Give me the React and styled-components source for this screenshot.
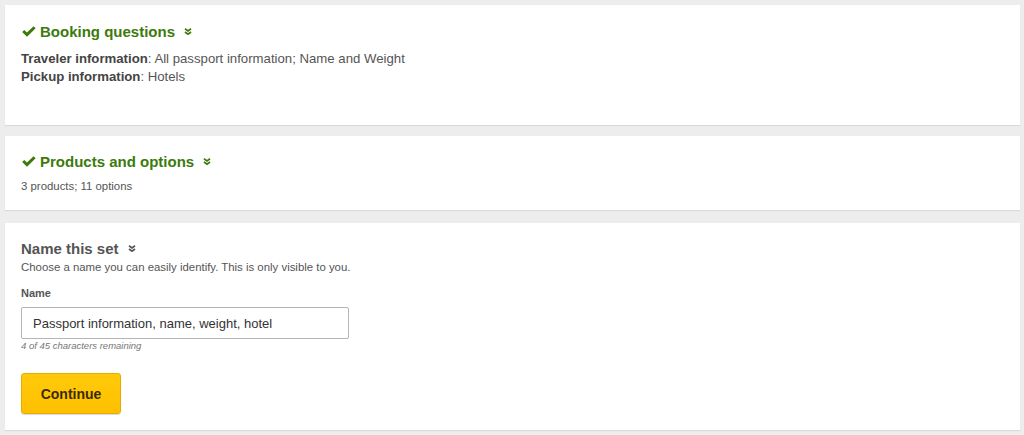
import React from 'react';
import styled, { createGlobalStyle } from 'styled-components';

const GlobalStyle = createGlobalStyle`
    body {
        margin: 0;
        background-color: #ededed;
        font-family: "Liberation Sans", Arial, sans-serif;
        color: #444;
    }
`;

const Page = styled.div`
    display: flex;
    flex-direction: column;
    padding: 5px 4px 5px 5px;
`;

const Card = styled.section`
    margin-top: ${(props) => props.$space || '0'};
    background-color: #fff;
    box-shadow: 0 1px 1px rgba(0, 0, 0, 0.08);
    padding: ${(props) => props.$pad || '16px'};
    display: flex;
    flex-direction: column;
    align-items: flex-start;
`;

const Title = styled.h2`
    display: flex;
    align-items: center;
    margin: 0;
    height: 20px;
    font-size: 15px;
    font-weight: bold;
    color: ${(props) => (props.$done ? '#3c7a0c' : '#555')};

    .check {
        width: 14px;
        height: 11px;
        margin: 0 4px 0 1px;
    }

    .toggle {
        width: 8px;
        height: 7px;
        margin-left: 9px;
        margin-top: 1px;
    }
`;

const Lines = styled.div`
    margin-top: ${(props) => props.$gap || '9px'};
    font-size: ${(props) => props.$size || '13px'};
    line-height: ${(props) => props.$line || '18px'};
    color: #555;

    b {
        color: #444;
    }
`;

const Label = styled.label`
    margin-top: 12px;
    font-size: 11px;
    line-height: 14px;
    font-weight: bold;
    color: #555;
`;

const Input = styled.input`
    box-sizing: border-box;
    margin-top: 7px;
    width: 328px;
    height: 32px;
    padding: 0 11px;
    border: 1px solid #b5b5b5;
    border-radius: 2px;
    font-family: "Liberation Sans", Arial, sans-serif;
    font-size: 13px;
    color: #333;
    outline: none;
`;

const Hint = styled.div`
    font-size: 9.5px;
    line-height: 12px;
    font-style: italic;
    color: #777;
    margin-top: 1px;
`;

const Button = styled.button`
    margin-top: 21px;
    width: 100px;
    height: 41px;
    border: 1px solid #e6ab00;
    border-radius: 3px;
    background: linear-gradient(#ffca0a, #ffc000);
    box-shadow: 0 1px 1px rgba(0, 0, 0, 0.15);
    font-family: "Liberation Sans", Arial, sans-serif;
    font-size: 14px;
    font-weight: bold;
    color: #3a2c00;
    cursor: pointer;
`;

const Check = () => (
    <svg className='check' viewBox='0 0 14 11' fill='none' stroke='currentColor' strokeWidth='3'>
        <polyline points='1.2,5 5,8.6 12.6,1.2' />
    </svg>
);

const Toggle = () => (
    <svg className='toggle' viewBox='0 0 8 7' fill='none' stroke='currentColor' strokeWidth='1.7'>
        <polyline points='1,0.8 4,3 7,0.8' />
        <polyline points='1,4 4,6.2 7,4' />
    </svg>
);

function App() {
    return (
        <>
            <GlobalStyle />
            <Page>
                <Card $pad='16px 16px 39px'>
                    <Title $done>
                        <Check />
                        Booking questions
                        <Toggle />
                    </Title>
                    <Lines $size='13.2px'>
                        <div><b>Traveler information</b>: All passport information; Name and Weight</div>
                        <div><b>Pickup information</b>: Hotels</div>
                    </Lines>
                </Card>
                <Card $space='11px' $pad='15px 16px 16px'>
                    <Title $done>
                        <Check />
                        Products and options
                        <Toggle />
                    </Title>
                    <Lines $gap='7px' $size='11.4px' $line='16px'>3 products; 11 options</Lines>
                </Card>
                <Card $space='13px' $pad='15px 16px 16px'>
                    <Title>
                        Name this set
                        <Toggle />
                    </Title>
                    <Lines $gap='2px' $size='11.4px' $line='14px'>
                        Choose a name you can easily identify. This is only visible to you.
                    </Lines>
                    <Label htmlFor='set-name'>Name</Label>
                    <Input id='set-name' type='text' defaultValue='Passport information, name, weight, hotel' />
                    <Hint>4 of 45 characters remaining</Hint>
                    <Button>Continue</Button>
                </Card>
            </Page>
        </>
    );
}

export default App;
